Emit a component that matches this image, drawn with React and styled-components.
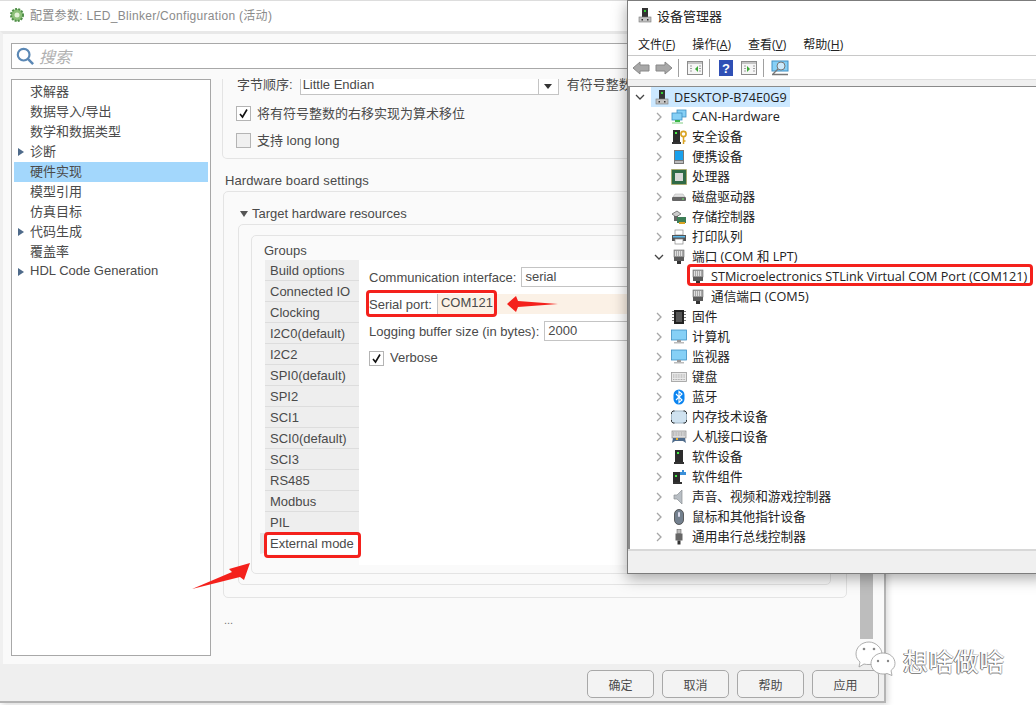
import React from 'react';
import styled, { createGlobalStyle } from 'styled-components';

const cjk = '"Noto Sans CJK SC", sans-serif';
const uiFont = '"Liberation Sans", "Noto Sans CJK SC", sans-serif';
const winFont = '"Open Sans", "Noto Sans CJK SC", sans-serif';

const Global = createGlobalStyle`
  html, body { margin: 0; background: #fff; }
  * { box-sizing: border-box; }
`;

const Desktop = styled.div`
  position: relative;
  width: 1036px;
  height: 705px;
  overflow: hidden;
  background: #fff;
  font-family: ${uiFont};
`;

/* config window */
const ConfigWindow = styled.div`
  position: absolute;
  left: 0;
  top: 0;
  width: 886px;
  height: 703px;
  display: flex;
  flex-direction: column;
  border-right: 2px solid #b4b4b4;
  border-bottom: 2px solid #b4b4b4;
  box-shadow: 2px 2px 6px rgba(0,0,0,.15);
`;

const ConfigTitle = styled.div`
  height: 31px;
  flex: none;
  display: flex;
  align-items: center;
  gap: 5px;
  padding: 0 0 3px 9px;
  background: #fff;
  color: #8b8b8b;
  font-size: 12px;
  letter-spacing: .3px;
  border-top: 1px solid #ddd;
`;

const ConfigBody = styled.div`
  flex: 1;
  min-height: 0;
  display: flex;
  flex-direction: column;
  background: #fafafa;
  border-top: 3px solid #e8e8e8;
  border-left: 3px solid #f0f0f0;
  padding: 9px 11px 8px 8px;
`;

const SearchBox = styled.div`
  height: 26px;
  flex: none;
  display: flex;
  align-items: center;
  gap: 5px;
  padding-left: 4px;
  background: #fff;
  border: 1px solid #a8a8a8;
  color: #b0b0b0;
  font-family: ${cjk};
  font-size: 16px;
  font-style: italic;
`;

const MainRow = styled.div`
  flex: 1;
  min-height: 0;
  margin-top: 10px;
  display: flex;
  gap: 11px;
`;

const Tree = styled.div`
  width: 200px;
  flex: none;
  padding: 2px;
  background: #fff;
  border: 1px solid #a8a8a8;
`;

const TreeRow = styled.div`
  height: 20px;
  display: flex;
  align-items: center;
  gap: 6px;
  padding: 0 0 3px 4px;
  background: ${p => (p.$active ? '#a3d7fc' : 'transparent')};
  color: #4a4a4a;
  font-size: 13px;
`;

const Caret = styled.span`
  width: 0;
  height: 0;
  flex: none;
  margin-top: 2px;
  border-left: 6px solid ${p => (p.$show ? '#4e6a8a' : 'transparent')};
  border-top: 4px solid transparent;
  border-bottom: 4px solid transparent;
`;

const Scroller = styled.div`
  flex: 1;
  min-width: 0;
  display: flex;
`;

const ScrollContent = styled.div`
  flex: 1;
  min-width: 0;
  padding-right: 13px;
  color: #4a4a4a;
  font-size: 13px;
`;

const ScrollBar = styled.div`
  width: 13px;
  height: 560px;
  flex: none;
  background: #bdbdbd;
`;

const TopGroup = styled.div`
  height: 80px;
  padding-left: 13px;
  border: 1px solid #e4e4e4;
  border-top: 0;
  border-radius: 0 0 5px 5px;
`;

const OrderRow = styled.div`
  height: 16px;
  display: flex;
  padding-left: 1px;
  line-height: 11px;
  white-space: nowrap;
`;

const Combo = styled.div`
  width: 259px;
  height: 16px;
  margin: 0 8px 0 7px;
  display: flex;
  justify-content: space-between;
  padding-left: 2px;
  background: #fff;
  border: 1px solid #c4c4c4;
  border-top: 0;
`;

const ComboArrow = styled.span`
  width: 20px;
  height: 100%;
  display: flex;
  align-items: center;
  justify-content: center;
  border-left: 1px solid #c4c4c4;
  &::after {
    content: '';
    border-top: 5px solid #333;
    border-left: 4px solid transparent;
    border-right: 4px solid transparent;
  }
`;

const CheckRow = styled.label`
  height: 27px;
  margin-top: ${p => p.$mt || 0}px;
  padding-bottom: 2px;
  display: flex;
  align-items: center;
  gap: 6px;
  font-size: 13px;
`;

const Box = styled.span`
  width: 15px;
  height: 15px;
  flex: none;
  margin-top: 2px;
  display: flex;
  align-items: center;
  justify-content: center;
  background: ${p => (p.$checked ? '#fff' : '#f0f0f0')};
  border: 1px solid #b4b4b4;
`;

const SectionLabel = styled.div`
  height: 32px;
  display: flex;
  align-items: center;
  padding: 10px 0 0 3px;
  font-size: 13px;
  letter-spacing: .1px;
`;

const Panel = styled.div`
  margin-left: ${p => p.$ml || 0}px;
  height: ${p => p.$h}px;
  padding: ${p => p.$pad};
  border: 1px solid #e4e4e4;
  border-radius: 5px;
`;

const Disclosure = styled.div`
  height: 21px;
  display: flex;
  align-items: center;
  gap: 4px;
  padding-left: 2px;
  &::before {
    content: '';
    border-top: 6px solid #555;
    border-left: 4px solid transparent;
    border-right: 4px solid transparent;
  }
`;

const GroupsTitle = styled.div`
  height: 24px;
  padding: 7px 0 0 12px;
  font-size: 13px;
  line-height: 15px;
`;

const GroupsRow = styled.div`
  display: flex;
  margin-left: 13px;
  height: 305px;
`;

const Tabs = styled.div`
  width: 94px;
  flex: none;
`;

const Tab = styled.div`
  height: 21px;
  line-height: 21px;
  padding-left: 5px;
  margin-left: ${p => (p.$active ? '-5px' : '0')};
  background: ${p => (p.$active ? '#fff' : '#eeeeee')};
  border-bottom: 1px solid ${p => (p.$active ? '#fff' : '#dddddd')};
  border-left: ${p => (p.$active ? '5px solid #e6e6e6' : '0')};
  font-size: 13px;
  white-space: nowrap;
`;

const TabPane = styled.div`
  flex: 1;
  padding: 7px 0 0 10px;
  background: #fff;
`;

const Field = styled.div`
  height: 20px;
  display: flex;
  align-items: center;
  gap: 5px;
  margin-top: ${p => p.$mt || 0}px;
  white-space: nowrap;
`;

const TextInput = styled.div`
  flex: 1;
  height: 20px;
  line-height: 18px;
  padding-left: 3px;
  background: ${p => (p.$warn ? '#fbf1e6' : '#fff')};
  border: ${p => (p.$warn ? '0' : '1px solid #c4c4c4')};
  border-left: 1px solid #c4c4c4;
  font-size: 13px;
`;

const Ellipsis = styled.div`
  padding: 16px 0 0 2px;
  font-size: 11px;
  color: #777;
`;

const Footer = styled.div`
  height: 37px;
  flex: none;
  display: flex;
  justify-content: flex-end;
  align-items: flex-start;
  gap: 8px;
  padding: 6px 5px 0 0;
  background: #efefef;
`;

const FootButton = styled.div`
  width: 67px;
  height: 28px;
  display: flex;
  align-items: center;
  justify-content: center;
  background: #f3f3f3;
  border: 1px solid #a8a8a8;
  border-radius: 5px;
  color: #4a4a4a;
  font-family: ${cjk};
  font-size: 12px;
`;

/* device manager window */
const DeviceWindow = styled.div`
  position: absolute;
  left: 627px;
  top: 0;
  width: 420px;
  height: 574px;
  display: flex;
  flex-direction: column;
  background: #fff;
  border: 1px solid #7c7c7c;
  box-shadow: 0 4px 14px rgba(0,0,0,.35);
  font-family: ${winFont};
  color: #222;
`;

const DeviceTitle = styled.div`
  height: 32px;
  flex: none;
  display: flex;
  align-items: center;
  gap: 4px;
  padding: 0 0 4px 9px;
  font-size: 13px;
  font-family: ${cjk};
`;

const MenuBar = styled.div`
  height: 23px;
  flex: none;
  display: flex;
  align-items: center;
  gap: 17px;
  padding-left: 10px;
  border-bottom: 1px solid #c8c8c8;
  font-size: 12px;
  u { text-underline-offset: 1px; }
`;

const ToolBar = styled.div`
  height: 23px;
  flex: none;
  display: flex;
  align-items: center;
  padding-left: 4px;
  background: #fff;
`;

const ToolGap = styled.span`
  width: ${p => p.$w}px;
  flex: none;
`;

const ToolSep = styled.span`
  width: 1px;
  height: 18px;
  flex: none;
  background: #a0a0a0;
`;

const DeviceStrip = styled.div`
  height: 8px;
  flex: none;
  background: #f0f0f0;
  border-top: 1px solid #e0e0e0;
  border-bottom: 1px solid #8a8a8a;
`;

const DeviceTree = styled.div`
  flex: 1;
  min-height: 0;
  border-left: 2px solid #8a8a8a;
  font-size: 12.65px;
  overflow: hidden;
`;

const DeviceRow = styled.div`
  height: 20px;
  display: flex;
  align-items: center;
  padding-left: ${p => p.$indent}px;
  white-space: nowrap;
`;

const Chevron = styled.span`
  width: 14px;
  height: 14px;
  flex: none;
  display: flex;
  align-items: center;
  justify-content: center;
  margin-right: 5px;
`;

const DeviceName = styled.span`
  margin-left: 4px;
  padding: 0 1px 2px;
  line-height: 18px;
`;

const RootLabel = styled.span`
  display: flex;
  align-items: center;
  gap: 4px;
  height: 20px;
  width: 139px;
  margin-left: -1px;
  padding-left: 3px;
  background: #cce8ff;
`;

const StatusBar = styled.div`
  height: 24px;
  flex: none;
  background: #f0f0f0;
  border-top: 2px solid #d8d8d8;
`;

/* annotations */
const RedFrame = styled.div`
  position: absolute;
  left: ${p => p.$x}px;
  top: ${p => p.$y}px;
  width: ${p => p.$w}px;
  height: ${p => p.$h}px;
  border: 3px solid #f4211c;
  border-radius: 4px;
  pointer-events: none;
`;

const Overlay = styled.svg`
  position: absolute;
  left: ${p => p.$x}px;
  top: ${p => p.$y}px;
`;

const Watermark = styled.div`
  position: absolute;
  left: 903px;
  top: 642px;
  color: #fff;
  font-family: ${cjk};
  font-size: 25px;
  line-height: 36px;
  letter-spacing: .4px;
  text-shadow: -1px 0 #666, 0 1px #888, 1px 0 #bbb;
`;

/* icons */
const Svg = ({ children, s = 16 }) => (
  <svg width={s} height={s} viewBox="0 0 16 16" style={{ flex: 'none' }}>{children}</svg>
);

const Tower = () => (
  <>
    <rect x="5" y="1" width="6" height="9" fill="#333" />
    <rect x="7" y="3" width="2" height="2" fill="#3c3" />
    <rect x="2" y="10" width="12" height="5" fill="#c4c4c4" stroke="#777" strokeWidth=".6" />
    <rect x="4.500" y="12" width="1.5" height="1.5" fill="#333" />
    <rect x="10" y="12" width="1.5" height="1.5" fill="#333" />
  </>
);

const Screen = ({ x = 1, y = 2, w = 14, h = 9 }) => (
  <rect x={x} y={y} width={w} height={h} fill="#86d0f6" stroke="#3f8fc4" strokeWidth=".8" />
);

const CheckMark = () => (
  <svg width="11" height="11" viewBox="0 0 11 11">
    <path d="M2 6l2.500 3L9 1.500" fill="none" stroke="#111" strokeWidth="1.6" />
  </svg>
);

const PaneIcon = ({ arrow }) => (
  <svg width="16" height="14" viewBox="0 0 16 14">
    <rect x=".5" y=".5" width="15" height="13" fill="#f6f6f6" stroke="#8c8c8c" />
    <rect x="1" y="1" width="14" height="2" fill="#c4c4c4" />
    <path d="M3 5h2M3 7.500h2M3 10h2M12 5h2M12 7.500h2M12 10h2" stroke="#a0a0a0" />
    <path d={arrow} fill="#3aaa35" />
  </svg>
);

const icons = {
  computer: <Tower />,
  net: (
    <>
      <Screen x={6} y={1} w={9} h={7} />
      <Screen x={1} y={4} w={10} h={7} />
      <rect x="4" y="11" width="5" height="2" fill="#3bb54a" />
      <rect x="1" y="13" width="11" height="2" fill="#bfe6c0" />
    </>
  ),
  security: (
    <>
      <rect x="2" y="1" width="7" height="12" fill="#2c2c2c" />
      <rect x="4" y="3" width="2" height="2" fill="#4e4" />
      <rect x="1" y="13" width="9" height="2" fill="#333" />
      <circle cx="12.5" cy="5" r="2.6" fill="none" stroke="#d9a322" strokeWidth="1.6" />
      <path d="M12.500 7.500V15M12.500 12h2" stroke="#d9a322" strokeWidth="1.5" />
    </>
  ),
  portable: (
    <>
      <rect x="3" y="1" width="10" height="14" fill="#777" />
      <rect x="4" y="2" width="8" height="9" fill="#19a0ec" />
      <rect x="4" y="12" width="8" height="2" fill="#bbb" />
    </>
  ),
  cpu: (
    <>
      <rect x="0.5" y="0.5" width="15" height="15" fill="#2f6a46" stroke="#b9a040" strokeWidth="1" strokeDasharray="1 1" />
      <rect x="4" y="4" width="8" height="8" fill="#d8d8d8" />
    </>
  ),
  disk: (
    <>
      <path d="M2 8l2-3h8l2 3z" fill="#e2e2e2" stroke="#aaa" strokeWidth=".5" />
      <rect x="1" y="8" width="14" height="4" rx="1" fill="#666" />
      <rect x="11" y="9.500" width="2" height="1" fill="#6e6" />
    </>
  ),
  storage: (
    <>
      <path d="M1 5l5-3 4 3-5 3z" fill="#ccc" stroke="#555" strokeWidth=".7" />
      <rect x="3" y="7" width="4" height="5" fill="#666" />
      <rect x="6" y="8" width="9" height="6" fill="#3c7d56" />
      <rect x="8" y="13" width="6" height="2" fill="#d9a322" />
    </>
  ),
  printer: (
    <>
      <rect x="4" y="1" width="8" height="5" fill="#fff" stroke="#888" strokeWidth=".7" />
      <rect x="1" y="6" width="14" height="6" fill="#555" />
      <rect x="2" y="7" width="12" height="1.5" fill="#5db8ea" />
      <rect x="4" y="10" width="8" height="5" fill="#fff" stroke="#888" strokeWidth=".7" />
    </>
  ),
  port: (
    <>
      <rect x="3" y="1" width="10" height="7" fill="#a8a8a8" stroke="#666" strokeWidth=".6" />
      <path d="M4.500 2v5M6.500 2v5M8.500 2v5M10.500 2v5" stroke="#eee" strokeWidth=".8" />
      <rect x="3" y="8" width="10" height="4" fill="#5a5a5a" />
      <rect x="6" y="12" width="4" height="3" fill="#333" />
    </>
  ),
  firmware: (
    <>
      <rect x="3" y="1" width="10" height="14" fill="#222" />
      <path d="M1 2.500h2M1 5.500h2M1 8.500h2M1 11.500h2M13 2.500h2M13 5.500h2M13 8.500h2M13 11.500h2" stroke="#777" strokeWidth="1.2" />
      <rect x="5" y="3" width="6" height="10" fill="#555" />
    </>
  ),
  monitor: (
    <>
      <Screen x={0.5} y={1} w={15} h={10} />
      <rect x="6" y="11" width="4" height="2" fill="#999" />
      <rect x="3" y="13" width="10" height="1.5" fill="#bbb" />
    </>
  ),
  keyboard: (
    <>
      <rect x="0.5" y="3.5" width="15" height="9" fill="#e8e8e8" stroke="#999" strokeWidth=".8" />
      <path d="M2 6h12M2 8h12M2 10.500h12" stroke="#aaa" strokeWidth="1" strokeDasharray="1 .6" />
    </>
  ),
  bluetooth: (
    <>
      <rect x="2.5" y="0.5" width="11" height="15" rx="5.5" fill="#0a84f0" />
      <path d="M5 5l6 6-3 2.500v-11l3 2.500-6 6" fill="none" stroke="#fff" strokeWidth="1.1" />
    </>
  ),
  memory: (
    <>
      <rect x="0.5" y="2" width="15" height="12" rx="2" fill="#cfe2f0" stroke="#9fb4c4" strokeWidth="1" />
      <path d="M.5 5V3.500l1.500-1.500h1.500M12.500 2H14l1.500 1.500V5M15.500 11v1.500L14 14h-1.500M3.500 14H2L.5 12.500V11" fill="none" stroke="#333" strokeWidth="1" />
    </>
  ),
  hid: (
    <>
      <rect x="1" y="2" width="14" height="7" fill="#ddd" stroke="#888" strokeWidth=".7" />
      <path d="M2 4h12M2 6h12" stroke="#999" strokeDasharray="1 .6" />
      <path d="M1 14l1-5h12l1 5-3-2H4z" fill="#4e6a8a" />
      <rect x="5" y="9" width="2" height="2" fill="#e9b12d" />
    </>
  ),
  softdev: (
    <>
      <rect x="4" y="1" width="8" height="12" fill="#2c2c2c" />
      <rect x="6" y="3" width="2" height="2" fill="#4e4" />
      <rect x="3" y="13" width="10" height="2" fill="#333" />
    </>
  ),
  softcomp: (
    <>
      <rect x="2" y="3" width="7" height="10" fill="#2c2c2c" />
      <rect x="4" y="6" width="2" height="2" fill="#4e4" />
      <rect x="2" y="13" width="9" height="2" fill="#333" />
      <path d="M9 3h2V1h2v2h2v3h-6z" fill="#3a8fd8" />
    </>
  ),
  sound: <path d="M3 6h3l5-5v14l-5-5H3z" fill="#b8bec4" stroke="#8a8f94" strokeWidth=".7" />,
  mouse: (
    <>
      <rect x="3.5" y="0.5" width="9" height="15" rx="4.5" fill="#73808e" stroke="#444" strokeWidth=".8" />
      <rect x="7" y="3" width="2" height="5" rx="1" fill="#dde" />
    </>
  ),
  usb: (
    <>
      <rect x="6" y="0.5" width="4" height="4" fill="#bbb" stroke="#666" strokeWidth=".6" />
      <rect x="4.500" y="4.500" width="7" height="7" fill="#666" />
      <rect x="6.500" y="11.500" width="3" height="4" fill="#333" />
    </>
  ),
};

const Chev = ({ open }) => (
  <svg width="10" height="10" viewBox="0 0 10 10">
    {open ? (
      <path d="M1 3l4 4 4-4" fill="none" stroke="#444" strokeWidth="1.3" />
    ) : (
      <path d="M3 1l4 4-4 4" fill="none" stroke="#a6a6a6" strokeWidth="1.3" />
    )}
  </svg>
);

const treeItems = ['求解器', '数据导入/导出', '数学和数据类型', '诊断', '硬件实现', '模型引用', '仿真目标', '代码生成', '覆盖率', 'HDL Code Generation'];
const caretItems = ['诊断', '代码生成', 'HDL Code Generation'];
const tabItems = ['Build options', 'Connected IO', 'Clocking', 'I2C0(default)', 'I2C2', 'SPI0(default)', 'SPI2', 'SCI1', 'SCI0(default)', 'SCI3', 'RS485', 'Modbus', 'PIL', 'External mode'];

const devices = [
  ['net', 'CAN-Hardware'],
  ['security', '安全设备'],
  ['portable', '便携设备'],
  ['cpu', '处理器'],
  ['disk', '磁盘驱动器'],
  ['storage', '存储控制器'],
  ['printer', '打印队列'],
  ['port', '端口 (COM 和 LPT)', 'open'],
  ['port', 'STMicroelectronics STLink Virtual COM Port (COM121)', 'child'],
  ['port', '通信端口 (COM5)', 'child'],
  ['firmware', '固件'],
  ['monitor', '计算机'],
  ['monitor', '监视器'],
  ['keyboard', '键盘'],
  ['bluetooth', '蓝牙'],
  ['memory', '内存技术设备'],
  ['hid', '人机接口设备'],
  ['softdev', '软件设备'],
  ['softcomp', '软件组件'],
  ['sound', '声音、视频和游戏控制器'],
  ['mouse', '鼠标和其他指针设备'],
  ['usb', '通用串行总线控制器'],
];

const App = () => (
  <Desktop>
    <Global />
    <ConfigWindow>
      <ConfigTitle>
        <Svg>
          <circle cx="8" cy="8" r="6" fill="#8cc078" stroke="#4f8f48" strokeWidth="2" strokeDasharray="2 1.2" />
          <circle cx="8" cy="8" r="2.5" fill="#e3f0d8" />
        </Svg>
        配置参数: LED_Blinker/Configuration (活动)
      </ConfigTitle>
      <ConfigBody>
        <SearchBox>
          <svg width="18" height="18" viewBox="0 0 20 20">
            <circle cx="8.5" cy="8.5" r="6.500" fill="none" stroke="#5b88b5" strokeWidth="2.4" />
            <path d="M13 13l6 6" stroke="#5b88b5" strokeWidth="2.8" />
          </svg>
          搜索
        </SearchBox>
        <MainRow>
          <Tree>
            {treeItems.map(t => (
              <TreeRow key={t} $active={t === '硬件实现'}>
                <Caret $show={caretItems.includes(t)} />
                {t}
              </TreeRow>
            ))}
          </Tree>
          <Scroller>
            <ScrollContent>
              <TopGroup>
                <OrderRow>
                  字节顺序:
                  <Combo>Little Endian<ComboArrow /></Combo>
                  有符号整数的
                </OrderRow>
                <CheckRow $mt={5}><Box $checked><CheckMark /></Box>将有符号整数的右移实现为算术移位</CheckRow>
                <CheckRow><Box />支持 long long</CheckRow>
              </TopGroup>
              <SectionLabel>Hardware board settings</SectionLabel>
              <Panel $h={407} $ml={1} $pad="11px 15px 0 14px">
                <Disclosure>Target hardware resources</Disclosure>
                <Panel $h={361} $pad="10px 15px 0 12px">
                  <Panel $h={339} $pad="0">
                    <GroupsTitle>Groups</GroupsTitle>
                    <GroupsRow>
                      <Tabs>
                        {tabItems.map(t => (
                          <Tab key={t} $active={t === 'External mode'}>{t}</Tab>
                        ))}
                      </Tabs>
                      <TabPane>
                        <Field>Communication interface:<TextInput>serial</TextInput></Field>
                        <Field $mt={7}>Serial port:<TextInput $warn>COM121</TextInput></Field>
                        <Field $mt={7}>Logging buffer size (in bytes):<TextInput>2000</TextInput></Field>
                        <CheckRow $mt={4}><Box $checked><CheckMark /></Box>Verbose</CheckRow>
                      </TabPane>
                    </GroupsRow>
                  </Panel>
                </Panel>
              </Panel>
              <Ellipsis>...</Ellipsis>
            </ScrollContent>
            <ScrollBar />
          </Scroller>
        </MainRow>
      </ConfigBody>
      <Footer>
        {['确定', '取消', '帮助', '应用'].map(t => <FootButton key={t}>{t}</FootButton>)}
      </Footer>
    </ConfigWindow>

    <DeviceWindow>
      <DeviceTitle><Svg><Tower /></Svg>设备管理器</DeviceTitle>
      <MenuBar>
        <span>文件(<u>F</u>)</span>
        <span>操作(<u>A</u>)</span>
        <span>查看(<u>V</u>)</span>
        <span>帮助(<u>H</u>)</span>
      </MenuBar>
      <ToolBar>
        <svg width="18" height="16" viewBox="0 0 18 16"><path d="M1 8l7-6v3h9v6H8v3z" fill="#a8a8a8" stroke="#888" /></svg>
        <ToolGap $w={5} />
        <svg width="18" height="16" viewBox="0 0 18 16"><path d="M17 8l-7-6v3H1v6h9v3z" fill="#a8a8a8" stroke="#888" /></svg>
        <ToolGap $w={5} />
        <ToolSep />
        <ToolGap $w={8} />
        <PaneIcon arrow="M11 5v6L8 8z" />
        <ToolGap $w={6} />
        <ToolSep />
        <ToolGap $w={9} />
        <svg width="14" height="16" viewBox="0 0 14 16">
          <rect width="14" height="16" fill="#2f4fb5" />
          <text x="7" y="13" fontSize="13" fontWeight="700" fill="#fff" textAnchor="middle" fontFamily="Liberation Sans">?</text>
        </svg>
        <ToolGap $w={8} />
        <PaneIcon arrow="M6 5v6l3-3z" />
        <ToolGap $w={6} />
        <ToolSep />
        <ToolGap $w={7} />
        <svg width="18" height="16" viewBox="0 0 18 16">
          <rect x="1" y="1" width="16" height="10" fill="#86d0f6" stroke="#3f8fc4" />
          <circle cx="10" cy="6" r="4" fill="#cdeafc" stroke="#777" />
          <path d="M7 9l-5 5M1 14.500h16" stroke="#777" strokeWidth="1.3" />
        </svg>
      </ToolBar>
      <DeviceStrip />
      <DeviceTree>
        <DeviceRow $indent={3}>
          <Chevron><Chev open /></Chevron>
          <RootLabel><Svg><Tower /></Svg>DESKTOP-B74E0G9</RootLabel>
        </DeviceRow>
        {devices.map(([icon, name, kind]) => (
          <DeviceRow key={name} $indent={kind === 'child' ? 60 : 22}>
            {kind !== 'child' && <Chevron><Chev open={kind === 'open'} /></Chevron>}
            <Svg>{icons[icon]}</Svg>
            <DeviceName>{name}</DeviceName>
          </DeviceRow>
        ))}
      </DeviceTree>
      <StatusBar />
    </DeviceWindow>

    <RedFrame $x={366} $y={290} $w={131} $h={27} />
    <RedFrame $x={264} $y={532} $w={97} $h={26} />
    <RedFrame $x={687} $y={264} $w={346} $h={22} />

    <Overlay $x={505} $y={294} width="54" height="20" viewBox="0 0 54 20">
      <path d="M2 10L11 2l2 5 40 3-40 3-2 5z" fill="#f4211c" />
    </Overlay>
    <Overlay $x={190} $y={560} width="64" height="32" viewBox="0 0 64 32">
      <path d="M2 29L42 12l-3-3 21-6-6 17-4-3z" fill="#f4211c" />
    </Overlay>

    <Overlay $x={855} $y={641} width="42" height="36" viewBox="0 0 42 36">
      <path d="M14 1C7 1 1 6 1 13c0 4 2 6 4 8l-1 5 5-3c2 .5 3 .5 5 .5 7 0 13-5 13-10.500S21 1 14 1z" fill="#fff" stroke="#999" strokeWidth=".8" />
      <path d="M28 12c-7 0-12 5-12 10.500S21 33 28 33c1.500 0 3 0 4-.5l5 2-1-5c2.500-2 4-4 4-7 0-6-5-10.500-12-10.500z" fill="#fff" stroke="#999" strokeWidth=".8" />
      <circle cx="9" cy="8" r="1.3" fill="#888" /><circle cx="19" cy="8" r="1.3" fill="#888" />
      <circle cx="23" cy="20" r="1.2" fill="#888" /><circle cx="33" cy="20" r="1.2" fill="#888" />
    </Overlay>
    <Watermark>想啥做啥</Watermark>
  </Desktop>
);

export default App;
